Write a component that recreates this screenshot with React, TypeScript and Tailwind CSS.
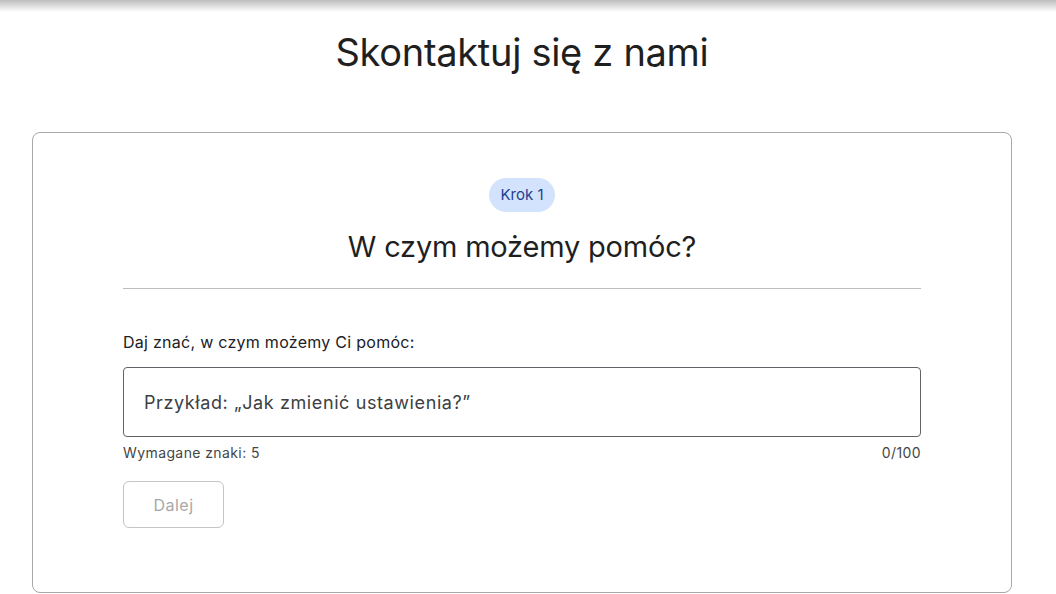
export default function App() {
  return (
    <div className="min-h-[594px] w-[1044px] bg-white font-['Inter',sans-serif] text-[#202124]">
      <div className="h-3 w-[1056px] bg-gradient-to-b from-[#bdbdbd] to-white" />
      <h1 className="mt-[18px] text-center text-[38px] leading-[44px] font-normal tracking-[-0.3px] text-[#1f1f1f]">
        Skontaktuj się z nami
      </h1>

      <div className="mx-8 mt-[58px] rounded-lg border border-[#a8a8a8] px-[90px] pt-[45px] pb-[64px]">
        <div className="flex flex-col items-center">
          <span className="rounded-full bg-[#d3e3fd] px-[11px] py-[6px] text-[15px] leading-[22px] text-[#1f3f8f]">
            Krok 1
          </span>
          <h2 className="mt-[17px] text-[29px] leading-[36px] font-normal tracking-[-0.2px] text-[#1f1f1f]">
            W czym możemy pomóc?
          </h2>
        </div>
        <div className="mt-[23px] border-t border-[#bdbdbd]" />

        <p className="mt-[42px] text-[16px] leading-[22px] tracking-[0.27px] text-[#202124]">
          Daj znać, w czym możemy Ci pomóc:
        </p>
        <div className="mt-[14px] flex h-[70px] items-center rounded-[4px] border border-[#5f6368] px-5">
          <span className="text-[18px] tracking-[0.6px] text-[#3c4043]">Przykład: „Jak zmienić ustawienia?”</span>
        </div>
        <div className="mt-[7px] flex justify-between text-[14px] leading-[18px] tracking-[0.4px] text-[#444746]">
          <span>Wymagane znaki: 5</span>
          <span>0/100</span>
        </div>
        <button className="mt-[19px] h-[47px] w-[101px] rounded-[6px] border border-[#c4c4c4] text-[16px] tracking-[0.5px] text-[#a8a8a8]">
          Dalej
        </button>
      </div>
    </div>
  );
}
